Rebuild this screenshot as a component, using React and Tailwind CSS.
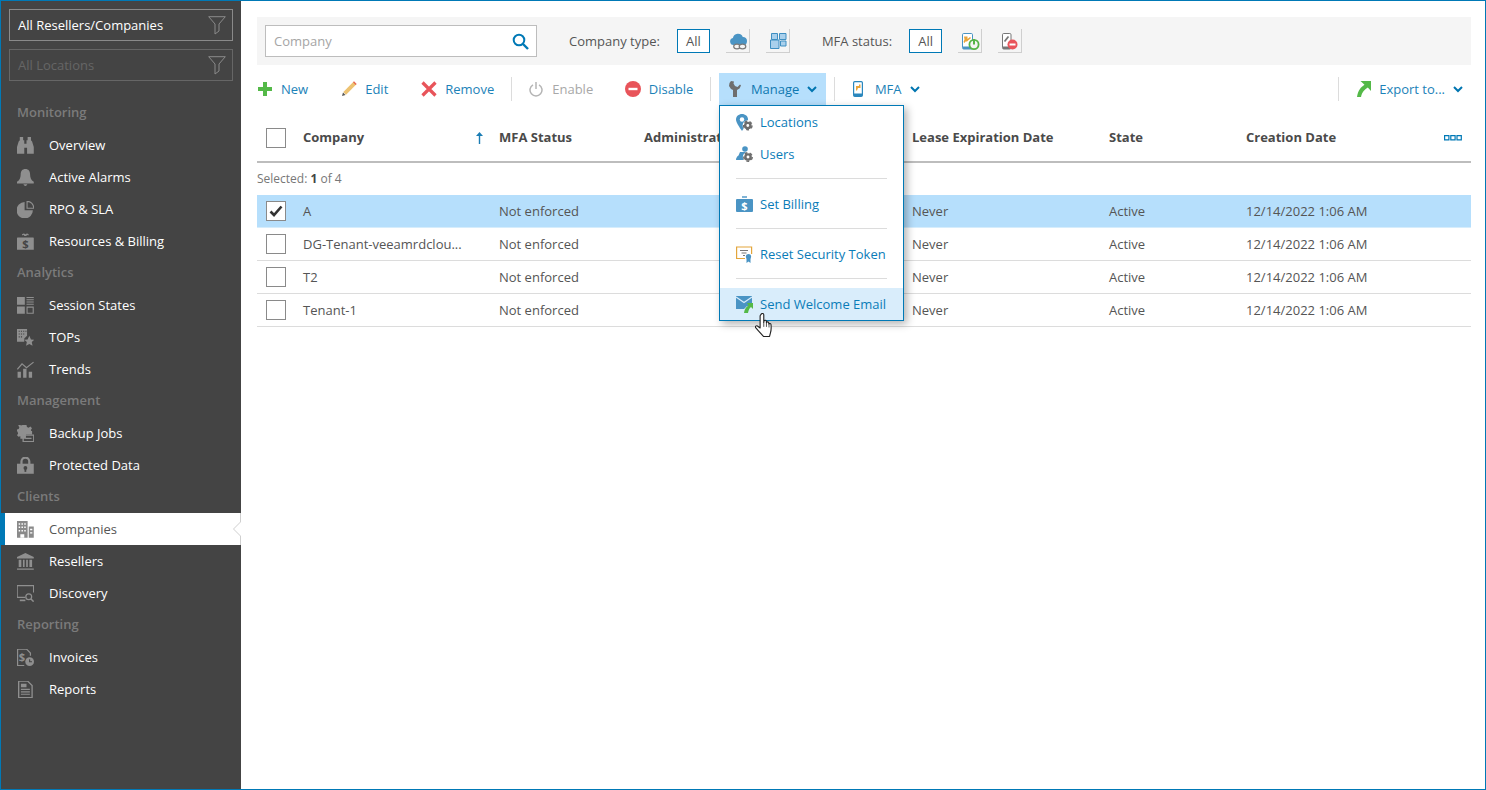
import React from "react";

const G = "#8f8f8f";
const B = "#4a94c4";
const Ic = ({ children }) => (
  <svg width="17" height="17" viewBox="0.5 0.5 15.2 15.2" className="shrink-0">{children}</svg>
);

const Gear = ({ x, y, r = 4, c = "#6d6d6d" }) => (
  <g>
    <circle cx={x} cy={y} r={r + 0.4} fill="#fff" />
    <circle cx={x} cy={y} r={r * 0.55} fill="none" stroke={c} strokeWidth={r * 0.5} />
    <circle cx={x} cy={y} r={r * 0.88} fill="none" stroke={c} strokeWidth={r * 0.3} strokeDasharray={`${r * 0.6} ${r * 0.5}`} />
  </g>
);

const side = {
  overview: <Ic><path fill={G} d="M3 .5h3v3h1v3h2v-3h1v-3h3v3l1 1 1.500 5V15.500h-6V10H7v5.500H.5V9.500L2 4.500l1-1z" /></Ic>,
  alarms: <Ic><path fill={G} d="M8 .5c2.800 0 4.200 2 4.200 4.700 0 3 .9 5.300 3.300 6.800v1.500H.5V12c2.400-1.500 3.300-3.800 3.300-6.800C3.800 2.500 5.200.5 8 .5zM6.300 14.200h3.400c0 .8-.8 1.400-1.700 1.400s-1.700-.6-1.700-1.400z" /></Ic>,
  rpo: <Ic><path fill={G} d="M7.300 1.500V8.700H14.700A7.300 7.300 0 1 1 7.300 1.500z" /><path fill="none" stroke={G} d="M9.500.8h.4A5.800 5.800 0 0 1 15.400 6.600V7H9.500z" /></Ic>,
  billing: <Ic><path fill={G} d="M1 4.500h14a.5.5 0 0 1 .5.500V15.500H.5V5a.5.5 0 0 1 .5-.5z" /><path fill="none" stroke={G} strokeWidth="1.200" d="M5.500 2.500a1 1 0 0 1 2 0h1a1 1 0 0 1 2 0" /><text x="8" y="13.800" textAnchor="middle" fontSize="10" fontWeight="700" fill="#444" fontFamily="Open Sans">$</text></Ic>,
  session: <Ic><path fill={G} d="M.5.500h7v7h-7zM.5 9h7v6.500h-7z" /><path fill="none" stroke={G} d="M9 1h6.500M9 3h6.500M9 5h6.500M9 7h6.500M9.500 9.500h5.500v5.500H9.500z" /></Ic>,
  tops: <Ic><path fill={G} d="M.5.500h9v6L7 9v3H.5z" /><path fill="#444" d="M2 2h1v1H2zM4 2h1v1H4zM6 2h1v1H6zM8 2h1v1H8zM2 4.500h1v1H2zM4 4.500h1v1H4zM6 4.500h1v1H6zM2 7h1v1H2zM4 7h1v1H4z" /><path fill={G} d="M11.500 6.500l1.500 3.300 3 .3-2.300 2.100.7 3.300-2.900-1.700-2.900 1.700.7-3.300L7 10.100l3-.3z" /></Ic>,
  trends: <Ic><path fill={G} d="M1 10h3v5.500H1zM6 7.500h3v8H6zM11 10h3v5.500h-3z" /><path fill="none" stroke={G} strokeWidth="1.100" d="M.8 8l4.200-5 4 3.500 6.300-5" /></Ic>,
  jobs: <Ic><path fill={G} d="M7 .5h2l.4 1.800 1.500.6 1.600-1 1.400 1.400-1 1.600.4 1H14v3H8.500v4H3.500v-2.400L1.800 11 .5 9.600l1-1.500-.5-1.500L.5 6V4.500l1.500-.4.600-1.500-1-1.600L2.500 0l1.600 1 1.500-.6z" /><path fill="none" stroke={G} strokeWidth="1.200" d="M6 9.500h9.500V15.500H6zM8 12.500h5.500" /></Ic>,
  data: <Ic><path fill="none" stroke={G} strokeWidth="2" d="M4.500 7V4.500a3.500 3.500 0 0 1 7 0V7" /><path fill={G} d="M.5 6.500h15v9H.5z" /><circle cx="8" cy="10.300" r="1.700" fill="#444" /><path fill="#444" d="M7.200 10.800h1.600v3H7.200z" /></Ic>,
  companies: <Ic><path fill="#8a8a8a" d="M.5.500h9.500v15H.5zM11 5.500h4.500v10H11z" /><path fill="#fff" d="M2 2.500h1.300v1.300H2zM4.500 2.500h1.300v1.300H4.500zM7 2.500h1.300v1.300H7zM2 5.500h1.300v1.300H2zM4.500 5.500h1.300v1.300H4.500zM7 5.500h1.300v1.300H7zM2 8.500h1.300v1.300H2zM4.500 8.500h1.300v1.300H4.500zM7 8.500h1.300v1.300H7zM12.200 7.500h2v1.200h-2zM12.200 10.500h2v1.200h-2zM3.500 12.300h3.500v3.200H3.500z" /></Ic>,
  resellers: <Ic><path fill={G} d="M8 .5l7.500 3.500V5.500H.5V4zM2 6.500h2.400v6.500H2zM5.800 6.500h1.500v6.500H5.800zM8.700 6.500h1.500v6.500H8.700zM11.600 6.500H14v6.500h-2.400zM.5 14.300h15v1.200H.5z" /></Ic>,
  discovery: <Ic><path fill="none" stroke={G} strokeWidth="1.200" d="M8 11.500H.6V1.100h14.800v6" /><path fill={G} d="M3 13.500h5v1.500H3z" /><circle cx="11" cy="11" r="2.600" fill="none" stroke={G} strokeWidth="1.100" /><path stroke={G} strokeWidth="1.300" d="M13 13l2.400 2.400" /></Ic>,
  invoices: <Ic><path fill="none" stroke={G} strokeWidth="1.100" d="M7 15.400H1V.6h8l3.500 3.500v2.500" /><text x="5" y="11.500" textAnchor="middle" fontSize="10" fontWeight="700" fill={G} fontFamily="Open Sans">$</text><circle cx="11.800" cy="11.800" r="3.900" fill={G} /><path stroke="#444" fill="none" d="M11.800 9.600v2.300h2.100" /></Ic>,
  reports: <Ic><path fill="none" stroke={G} strokeWidth="1.200" d="M2 .6h8l4 4V15.400H2z" /><path fill={G} d="M4 3h5v3H4zM4 7.500h8v1H4zM4 9.700h8v1H4zM4 11.900h8v1H4z" /></Ic>,
};

const T = ({ children, className = "" }) => <span className={"pt-[2px] " + className}>{children}</span>;

const Funnel = () => (
  <svg width="18" height="19" viewBox="0 0 18 19" className="shrink-0">
    <path fill="none" stroke="#8a8a8a" d="M.7.700h16.600L11 8v7l-4 3V8z" />
  </svg>
);

const Section = ({ children }) => (
  <div className="h-8 flex items-center pl-4 text-[13px] font-semibold text-[#7b7b7b]">{children}</div>
);
const Item = ({ icon, children, active }) =>
  active ? (
    <div className="relative h-8 flex items-center bg-white border-l-4 border-[#0079b6] pl-3 text-[13px] text-[#555]">
      <span className="w-8">{icon}</span>
      <T>{children}</T>
      <svg width="9" height="32" viewBox="0 0 9 32" className="absolute right-0 top-0">
        <path fill="none" stroke="#cfcfcf" d="M8.500 0V9L1.500 16L8.500 23V32" />
      </svg>
    </div>
  ) : (
    <div className="h-8 flex items-center pl-4 text-[13px] text-white">
      <span className="w-8">{icon}</span>
      <T>{children}</T>
    </div>
  );

const Chevron = ({ className = "" }) => (
  <svg width="10" height="7" viewBox="0 0 10 7" className={"shrink-0 " + className}>
    <path fill="none" stroke="#0075b0" strokeWidth="2" d="M1 1l4 4 4-4" />
  </svg>
);
const Sep = ({ className = "" }) => <div className={"w-px h-6 bg-[#dcdcdc] " + className} />;

const TI = ({ icon, label, ml, gap, muted }) => (
  <div className={"flex items-center text-[13px] " + ml + " " + (muted ? "text-[#a8a8a8]" : "text-[#1c82b8]")}>
    {icon}
    <T className={gap}>{label}</T>
  </div>
);

const IconBtn = ({ className = "", children }) => (
  <div className={"w-6 h-6 border-r border-b border-[#cfcfcf] " + className}>{children}</div>
);
const S24 = ({ children }) => (
  <svg width="24" height="24" viewBox="0 0 24 24" className="block">{children}</svg>
);
const AllBtn = ({ className = "" }) => (
  <div className={"w-[33px] h-6 bg-white border border-[#0079b6] flex items-center justify-center text-[13px] text-[#555] " + className}><T>All</T></div>
);

const rows = [
  ["A", true],
  ["DG-Tenant-veeamrdclou...", false],
  ["T2", false],
  ["Tenant-1", false],
];

const Check = ({ checked }) => (
  <div className="w-5 h-5 ml-[9px] bg-white border border-[#8a8a8a] flex items-center justify-center">
    {checked && (
      <svg width="14" height="12" viewBox="0 0 14 12"><path fill="none" stroke="#333" strokeWidth="2.600" d="M1.500 6.500l3.500 3.500 7.500-8.500" /></svg>
    )}
  </div>
);
const cols = "grid grid-cols-[46px_196px_145px_268px_197px_137px_1fr] items-center";

const MenuItem = ({ icon, children, hover }) => (
  <div className={"h-8 flex items-center pl-4 text-[13px] text-[#0a7cb8] " + (hover ? "bg-[#d9edfb]" : "")}>
    <span className="w-6">{icon}</span>
    <T>{children}</T>
  </div>
);
const MenuSep = () => <div className="h-px mt-2 mb-[9px] mx-4 bg-[#dcdcdc]" />;

export default function App() {
  return (
    <div className="w-[1486px] h-[790px] flex border border-[#0079b6] overflow-hidden bg-white font-['Open_Sans',sans-serif]">
      <aside className="w-[240px] shrink-0 bg-[#444444] flex flex-col">
        <div className="pt-2 px-2 flex flex-col gap-2">
          <div className="h-8 border border-[#8a8a8a] pl-2 pr-[6px] flex items-center justify-between text-[13px] text-white">
            <T>All Resellers/Companies</T> <Funnel />
          </div>
          <div className="h-8 border border-[#666] pl-2 pr-[6px] flex items-center justify-between text-[13px] text-[#666]">
            <T>All Locations</T> <Funnel />
          </div>
        </div>
        <nav className="pt-4">
          <Section>Monitoring</Section>
          <Item icon={side.overview}>Overview</Item>
          <Item icon={side.alarms}>Active Alarms</Item>
          <Item icon={side.rpo}>RPO &amp; SLA</Item>
          <Item icon={side.billing}>Resources &amp; Billing</Item>
          <Section>Analytics</Section>
          <Item icon={side.session}>Session States</Item>
          <Item icon={side.tops}>TOPs</Item>
          <Item icon={side.trends}>Trends</Item>
          <Section>Management</Section>
          <Item icon={side.jobs}>Backup Jobs</Item>
          <Item icon={side.data}>Protected Data</Item>
          <Section>Clients</Section>
          <Item icon={side.companies} active>Companies</Item>
          <Item icon={side.resellers}>Resellers</Item>
          <Item icon={side.discovery}>Discovery</Item>
          <Section>Reporting</Section>
          <Item icon={side.invoices}>Invoices</Item>
          <Item icon={side.reports}>Reports</Item>
        </nav>
      </aside>

      <main className="relative flex-1 pt-4 pl-4 pr-[14px]">
        <div className="h-12 bg-[#f5f5f5] flex items-center pl-2 text-[13px] text-[#555]">
          <div className="w-[272px] h-8 bg-white border border-[#bdbdbd] flex items-center justify-between pl-2 pr-[7px] text-[#a5a5a5]">
            <T>Company</T>
            <svg width="17" height="17" viewBox="0 0 17 17"><circle cx="7" cy="7" r="5.300" fill="none" stroke="#0079b6" strokeWidth="2" /><path stroke="#0079b6" strokeWidth="2.400" d="M11 11l5 5" /></svg>
          </div>
          <T className="ml-8">Company type:</T>
          <AllBtn className="ml-[17px]" />
          <IconBtn className="ml-4">
            <S24>
              <path fill={B} d="M8 16H7.500a3.600 3.600 0 0 1-.6-7.100A5.200 5.200 0 0 1 16.800 8a3.900 3.900 0 0 1 4.200 4c0 1.600-.7 3-1.500 4z" />
              <g fill="#f5f5f5" stroke="#7a7a7a" strokeWidth="1.200">
                <ellipse cx="11" cy="17.500" rx="3.300" ry="2.400" />
                <ellipse cx="16.500" cy="17.500" rx="3.300" ry="2.400" />
              </g>
            </S24>
          </IconBtn>
          <IconBtn className="ml-4">
            <S24>
              <g fill="#a9d0ec" stroke="#3f8fc2">
                <path d="M5.500 4.500h6v6h-6zM13.500 4.500h6.500v6h-6.500zM4.500 11h8.500v8.500H4.500zM14.500 12h5.500v5h-5.500z" />
              </g>
            </S24>
          </IconBtn>
          <T className="ml-8">MFA status:</T>
          <AllBtn className="ml-[17px]" />
          <IconBtn className="ml-4">
            <S24>
              <rect x="4.500" y="4.500" width="10" height="15.500" rx="1.200" fill="#fff" stroke={B} />
              <path fill={B} d="M5 17.500h9v2.500H5z" />
              <path fill="#e9a53a" d="M6 7.500h3.500v2.500L12 8l1 1-4 3.500H7.500L6.500 14 5.500 13l1-2.500z" />
              <circle cx="16" cy="15.500" r="4.600" fill="#f5f5f5" stroke="#56b448" strokeWidth="1.800" />
              <path stroke="#56b448" strokeWidth="2" d="M16 10v5.500" />
            </S24>
          </IconBtn>
          <IconBtn className="ml-4">
            <S24>
              <rect x="4.500" y="4.500" width="8.500" height="15.500" rx="1.200" fill="#fff" stroke="#777" />
              <path fill="#777" d="M5 17.500h7.500v2.500H5z" />
              <path stroke="#777" strokeWidth="1.800" d="M6.500 12.500l4-5" />
              <circle cx="14.500" cy="15.500" r="5" fill="#e9545a" />
              <path stroke="#fff" strokeWidth="2" d="M11.500 15.500h6" />
            </S24>
          </IconBtn>
        </div>

        <div className="mt-2 h-8 flex items-center">
          <TI ml="ml-[1px]" gap="ml-[9px]" label="New" icon={<svg width="14" height="14" viewBox="0 0 14 14"><path fill="#54b948" d="M5 0h4v5h5v4H9v5H5V9H0V5h5z" /></svg>} />
          <TI ml="ml-[33px]" gap="ml-2" label="Edit" icon={<svg width="16" height="16" viewBox="0 0 16 16"><path fill="#edc271" d="M12.500.8l2.700 2.700L5 13.700 2.300 11z" /><path fill="#e8674f" d="M13 .3l2.700 2.700-1 1L12 1.300z" /><path fill="#555" d="M1 15l1-3.500L4.500 14z" /></svg>} />
          <TI ml="ml-[33px]" gap="ml-2" label="Remove" icon={<svg width="16" height="16" viewBox="0 0 16 16"><path stroke="#e8545a" strokeWidth="3.200" d="M1.500 1.500l13 13M14.500 1.500l-13 13" /></svg>} />
          <Sep className="ml-[17px]" />
          <TI muted ml="ml-[17px]" gap="ml-[9px]" label="Enable" icon={<svg width="14" height="15" viewBox="0 0 14 15"><path fill="none" stroke="#b5b5b5" strokeWidth="1.500" d="M4 2.800a6 6 0 1 0 6 0" /><path stroke="#b5b5b5" strokeWidth="1.500" d="M7 0v7" /></svg>} />
          <TI ml="ml-[32px]" gap="ml-[7.5px]" label="Disable" icon={<svg width="16" height="16" viewBox="0 0 16 16"><circle cx="8" cy="8" r="8" fill="#e8545a" /><path stroke="#fff" strokeWidth="2.400" d="M3.500 8h9" /></svg>} />
          <Sep className="ml-[16.5px]" />
          <div className="ml-2 w-[107px] h-8 bg-[#b6dffc] flex items-center pl-[10px] text-[13px] text-[#0f78b0]">
            <svg width="12" height="16" viewBox="0 0 12 16"><path fill="#6e6e6e" d="M2 0L.5 2 0 5l2 3 2 1v7h4V9l2.500-1.500L12 4.500l-1-1L8.500 6 6 5 4.500 2.500 5 .5z" /></svg>
            <T className="ml-[10px]">Manage</T>
            <Chevron className="ml-2" />
          </div>
          <Sep className="ml-2" />
          <TI ml="ml-[18px]" gap="ml-3" label="MFA" icon={<svg width="10" height="16" viewBox="0 0 10 16"><rect x=".6" y=".6" width="8.800" height="14.800" rx="1.200" fill="#fff" stroke="#2a87bd" strokeWidth="1.200" /><path fill="#2a87bd" d="M1 12.500h8V15H1z" /><path fill="#e9a53a" d="M3 5h3V3.500h1.500V7H5l-1 2.500H3z" /></svg>} />
          <Chevron className="ml-2" />
          <div className="flex-1" />
          <Sep />
          <TI ml="ml-[18px]" gap="ml-2" label="Export to..." icon={<svg width="14" height="16" viewBox="0 0 14 16"><path fill="#54b948" d="M3.500 0H14v10l-3.200-3.400C8 8.500 5 11 4 16H0C1 9.500 4 6 7.500 3.800z" /></svg>} />
          <Chevron className="ml-2 mr-[8px]" />
        </div>

        <div className={cols + " h-12 mt-[10px] border-b-2 border-[#bdbdbd] text-[13px] font-bold text-[#4a4a4a]"}>
          <Check />
          <div className="flex items-center justify-between pr-[16px]">
            Company
            <svg width="7" height="12" viewBox="0 0 7 12"><path fill="#1b7db4" d="M3.500 0L7 4H4.200v8H2.800V4H0z" /></svg>
          </div>
          <div>MFA Status</div>
          <div>Administrator</div>
          <div>Lease Expiration Date</div>
          <div>State</div>
          <div className="flex items-center justify-between pr-[9px]">
            Creation Date
            <svg width="18" height="6" viewBox="0 0 18 6"><path fill="none" stroke="#0079b6" strokeWidth="1.200" d="M.6.600h4.300v4.300H.6zM6.800.600h4.300v4.300H6.800zM13 .600h4.300v4.300H13z" /></svg>
          </div>
        </div>
        <div className="h-8 flex items-center text-xs text-[#777]">
          Selected:&nbsp;<b className="text-[#444]">1</b>&nbsp;of 4
        </div>
        {rows.map(([name, sel]) => (
          <div key={name} className={cols + " h-[33px] border-b text-[13px] text-[#555] " + (sel ? "bg-[#b6dffc] border-[#d6edfc]" : "border-[#dcdcdc]")}>
            <Check checked={sel} />
            <div className="pt-[2px]">{name}</div>
            <div className="pt-[2px]">Not enforced</div>
            <div />
            <div className="pt-[2px]">Never</div>
            <div className="pt-[2px]">Active</div>
            <div className="pt-[2px]">12/14/2022 1:06 AM</div>
          </div>
        ))}

        <div className="absolute left-[478px] top-[104px] w-[185px] bg-white border border-[#0079b6] shadow-[3px_3px_8px_rgba(0,0,0,0.3)]">
          <MenuItem icon={<svg width="17" height="17" viewBox="0 0 17 17"><path fill={B} d="M6 0c3.300 0 6 2.300 6 5.500 0 3-3.500 8-6 11.500C3.500 13.500 0 8.500 0 5.500 0 2.300 2.700 0 6 0z" /><circle cx="6" cy="5.500" r="2.200" fill="#fff" /><Gear x={11.800} y={11.500} r={4.800} /></svg>}>Locations</MenuItem>
          <MenuItem icon={<svg width="17" height="16" viewBox="0 0 17 16"><circle cx="9" cy="3" r="2.800" fill={B} /><path fill={B} d="M0 14c0-2 1-3.500 2.500-4.500L4 6h6.500l1 3H8v5z" /><Gear x={12} y={11} r={4.800} /></svg>}>Users</MenuItem>
          <MenuSep />
          <MenuItem icon={<svg width="17" height="16" viewBox="0 0 17 16"><path fill={B} d="M1 3h15a1 1 0 0 1 1 1v11a1 1 0 0 1-1 1H1a1 1 0 0 1-1-1V4a1 1 0 0 1 1-1z" /><path stroke={B} strokeWidth="1.400" d="M6 1h5" /><text x="8.500" y="14" textAnchor="middle" fontSize="11" fontWeight="700" fill="#fff" fontFamily="Open Sans">$</text></svg>}>Set Billing</MenuItem>
          <MenuSep />
          <MenuItem icon={<svg width="17" height="17" viewBox="0 0 17 17"><path fill="none" stroke="#e3a63c" strokeWidth="1.200" d="M9 12.500H.6V1h15v7" /><path stroke="#777" strokeWidth="1.200" d="M4 4.500h8M5.500 7h5M7 9.500h2" /><circle cx="12.500" cy="10.500" r="2.600" fill={B} /><path fill={B} d="M10.500 12h4v5l-2-1.500-2 1.500z" /></svg>}>Reset Security Token</MenuItem>
          <MenuSep />
          <MenuItem hover icon={<svg width="17" height="17" viewBox="0 0 17 17"><path fill={B} d="M0 0h16v10H11L8 13H0z" /><path fill="none" stroke="#d9edfb" strokeWidth="1.200" d="M0 1l8 5.500L16 1" /><path fill="#54b948" d="M11 7h6v6l-2-2c-1.500 1-2.500 3-3 6H8c.4-3.500 2-6 4.500-7.500z" /></svg>}>Send Welcome Email</MenuItem>
        </div>

        <svg width="18" height="25" viewBox="0.500 0.500 16 22.500" className="absolute left-[514px] top-[312px]">
          <path fill="#fff" stroke="#222" strokeWidth="1" strokeLinejoin="round" d="M6 1.500c.8-1 2.200-.6 2.300.6V9l.2-1.200c.3-1 1.900-1 2.100.1l.1 1.300c.3-1 1.900-.9 2.100.2l.1 1c.4-.8 1.800-.6 1.900.5.300 3 .2 5.500-.5 7.500l-.8 3.200H8L3.500 16.500 1 13.700c-.7-1 .5-2.200 1.600-1.500L5 14V3z" />
          <path stroke="#222" strokeWidth=".7" d="M8.300 9v4M10.700 9v4M13 10v3.500" />
        </svg>
      </main>
    </div>
  );
}
